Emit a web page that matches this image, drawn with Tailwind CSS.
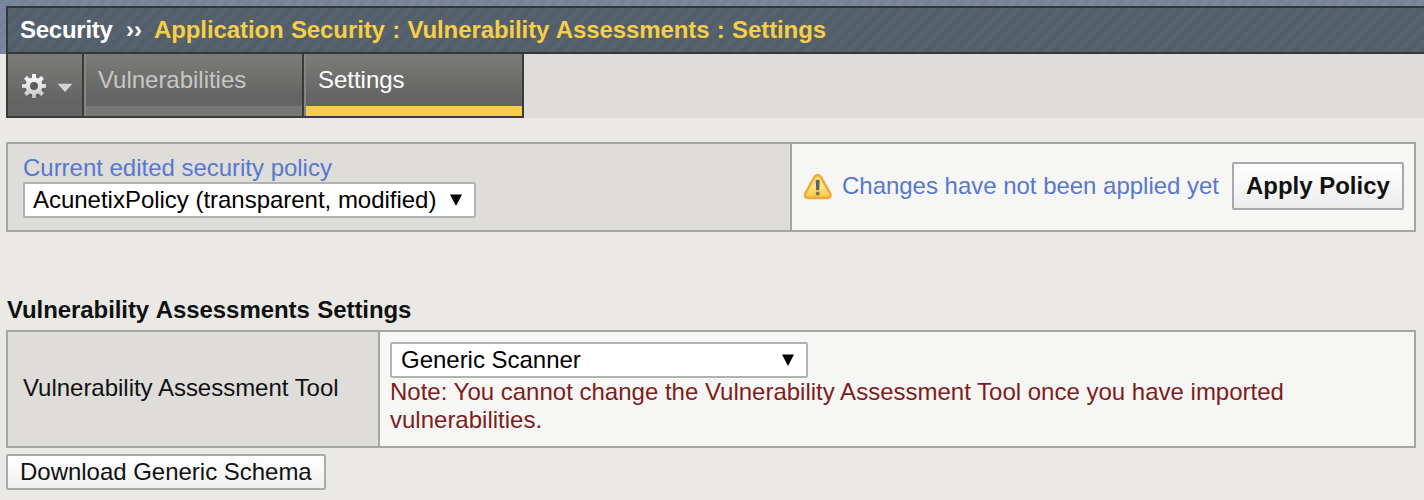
<!DOCTYPE html>
<html lang="en">
<head>
<meta charset="utf-8">
<title>Vulnerability Assessments : Settings</title>
<script src="https://cdn.jsdelivr.net/npm/@tailwindcss/browser@4"></script>
</head>
<body class="h-[500px] w-[1424px] overflow-hidden bg-[#eae9e5] font-['Liberation_Sans',Arial,sans-serif] text-[24px] leading-[28px] tracking-[-0.02px] text-[#111]">
  <!-- Title bar -->
  <header class="h-[54px] bg-[#76849a] bg-[repeating-linear-gradient(135deg,#76849a_0_4px,#7b889c_4px_8px)] pt-[6px] pl-[6px]">
    <h1 class="flex h-[48px] items-start border-y-2 border-l-2 border-[#353739] bg-[repeating-linear-gradient(135deg,#515d69,#57636e_5px,#515d69_10px)] pt-[8px] pl-[12px] font-bold whitespace-pre text-[#f7ce46]">
      <span class="w-[106px] tracking-[-0.25px] text-white">Security</span><span class="w-[28px] text-white">››</span><span class="tracking-[-0.1px] [word-spacing:0.8px]">Application Security : Vulnerability Assessments : Settings</span>
    </h1>
  </header>

  <!-- Tabs -->
  <nav class="flex h-[64px] pl-[6px]">
    <div class="flex w-[518px] border-x-2 border-b-2 border-[#3a3a39] text-[#c6c6c5]">
      <button class="flex w-[76px] shrink-0 items-start border-r-2 border-[#3a3a39] bg-linear-to-b from-[#7c7c7a] to-[#646464] to-75% pt-[19px] pl-[13px]" aria-label="Options">
        <svg class="h-[26px] w-[26px]" viewBox="-13 -13 26 26">
          <defs><linearGradient id="gear" x1="0" y1="0" x2="0" y2="1"><stop offset="0" stop-color="#fff"/><stop offset="1" stop-color="#c4c4c4"/></linearGradient></defs>
          <circle r="9.5" cy="1.2" fill="#4a4a4a" opacity=".5"/>
          <path fill="url(#gear)" fill-rule="evenodd" d="M-1.8-12H1.8L2.1-8.3 4.3-7.4 7.3-9.9 9.9-7.3 7.4-4.3 8.3-2.1 12-1.8V1.8L8.3 2.1 7.4 4.3 9.9 7.3 7.3 9.9 4.3 7.4 2.1 8.3 1.8 12H-1.8L-2.1 8.3-4.3 7.4-7.3 9.9-9.9 7.3-7.4 4.3-8.3 2.1-12 1.8V-1.8L-8.3-2.1-7.4-4.3-9.9-7.3-7.3-9.9-4.3-7.4-2.1-8.3ZM0-4A4 4 0 1 0 0 4 4 4 0 1 0 0-4Z"/>
        </svg>
        <svg class="mt-[10px] ml-[10px] h-[10px] w-[16px] shrink-0" viewBox="0 0 16 10"><path fill="#d2d2d2" d="M0.5 0.7H15.5L8 9Z"/></svg>
      </button>
      <a class="flex w-[220px] shrink-0 border-r-2 border-r-[#3a3a39]">
        <span class="w-[2px] bg-[#858583]"></span>
        <span class="grow border-b-[10px] border-b-[#777775] bg-linear-to-b from-[#7c7c7a] to-[#646464] to-85% pt-[12px] pl-[12px]">Vulnerabilities</span>
      </a>
      <a class="flex w-[218px] shrink-0 text-white">
        <span class="w-[2px] bg-[#858583]"></span>
        <span class="grow border-b-[10px] border-b-[#f7ce46] bg-linear-to-b from-[#7c7c7a] to-[#646464] to-85% pt-[12px] pl-[12px]">Settings</span>
      </a>
    </div>
    <div class="grow bg-[#dedddA]"></div>
  </nav>

  <main class="pr-[8px] pl-[6px]">
    <!-- Policy bar -->
    <section class="mt-[24px] flex h-[90px] border-2 border-[#a5a5a4] bg-[#f6f6f4]">
      <div class="w-[784px] shrink-0 border-r-2 border-[#a5a5a4] bg-[#dedddA] pt-[10px] pl-[15px]">
        <div class="text-[#5878ce]">Current edited security policy</div>
        <div class="flex h-[36px] w-[453px] items-start justify-between rounded-[2px] border-2 border-[#b2b2b2] bg-white pt-[2px] pr-[11px] pl-[8px] text-black">
          <span>AcunetixPolicy (transparent, modified)</span>
          <svg class="mt-[7px] h-[14px] w-[14px]" viewBox="0 0 14 14"><path d="M1 1.5H13L7 13Z"/></svg>
        </div>
      </div>
      <div class="flex grow items-start">
        <svg class="mt-[28px] ml-[11px] h-[30px] w-[30px] shrink-0" viewBox="0 0 30 30">
          <defs><linearGradient id="warn" x1="0" y1="0" x2="0" y2="1"><stop offset="0" stop-color="#fbdc72"/><stop offset=".5" stop-color="#fde68a"/><stop offset="1" stop-color="#f8c638"/></linearGradient></defs>
          <path fill="url(#warn)" stroke="#eea83c" stroke-width="2.4" stroke-linejoin="round" d="M14.7 3C13.2 3 12.2 3.7 11.4 5.2L2.6 20.8C1 24 2.2 26 5 26H24.4C27.2 26 28.4 24 26.8 20.8L18 5.2C17.2 3.7 16.2 3 14.7 3Z"/>
          <path fill="#5f6068" d="M12.7 8.5Q14.7 7 16.7 8.5L16.2 18.2H13.2Z"/><circle cx="14.7" cy="21.4" r="2" fill="#7c7354"/>
        </svg>
        <span class="mt-[28px] ml-[9px] w-[390px] shrink-0 text-[#5878ce]">Changes have not been applied yet</span>
        <button class="mt-[18px] flex h-[48px] w-[172px] shrink-0 items-start rounded-[2px] border-2 border-[#a9a9a9] bg-linear-to-b from-white to-[#ededed] pt-[8px] pl-[12px] font-bold whitespace-nowrap text-[#111]">Apply Policy</button>
      </div>
    </section>

    <!-- Settings -->
    <h2 class="mt-[64px] h-[34px] pl-px font-bold tracking-[-0.08px] [word-spacing:1px]">Vulnerability Assessments Settings</h2>
    <section class="flex h-[118px] border-2 border-[#a5a5a4] bg-[#f6f6f4]">
      <div class="w-[372px] shrink-0 border-r-2 border-[#a5a5a4] bg-[#dedddA] pt-[42px] pl-[15px]">Vulnerability Assessment Tool</div>
      <div class="grow pt-[10px] pl-[10px]">
        <div class="flex h-[36px] w-[418px] items-start justify-between rounded-[2px] border-2 border-[#b2b2b2] bg-white pt-[2px] pr-[11px] pl-[9px] text-black">
          <span>Generic Scanner</span>
          <svg class="mt-[7px] h-[14px] w-[14px]" viewBox="0 0 14 14"><path d="M1 1.5H13L7 13Z"/></svg>
        </div>
        <p class="tracking-[0] text-[#7d1d20]">Note: You cannot change the Vulnerability Assessment Tool once you have imported<br>vulnerabilities.</p>
      </div>
    </section>
    <button class="mt-[6px] flex h-[36px] w-[320px] items-start rounded-[2px] border-2 border-[#a9a9a9] bg-linear-to-b from-white to-[#f0f0f0] pt-[2px] pl-[12px] whitespace-nowrap">Download Generic Schema</button>
  </main>
</body>
</html>
